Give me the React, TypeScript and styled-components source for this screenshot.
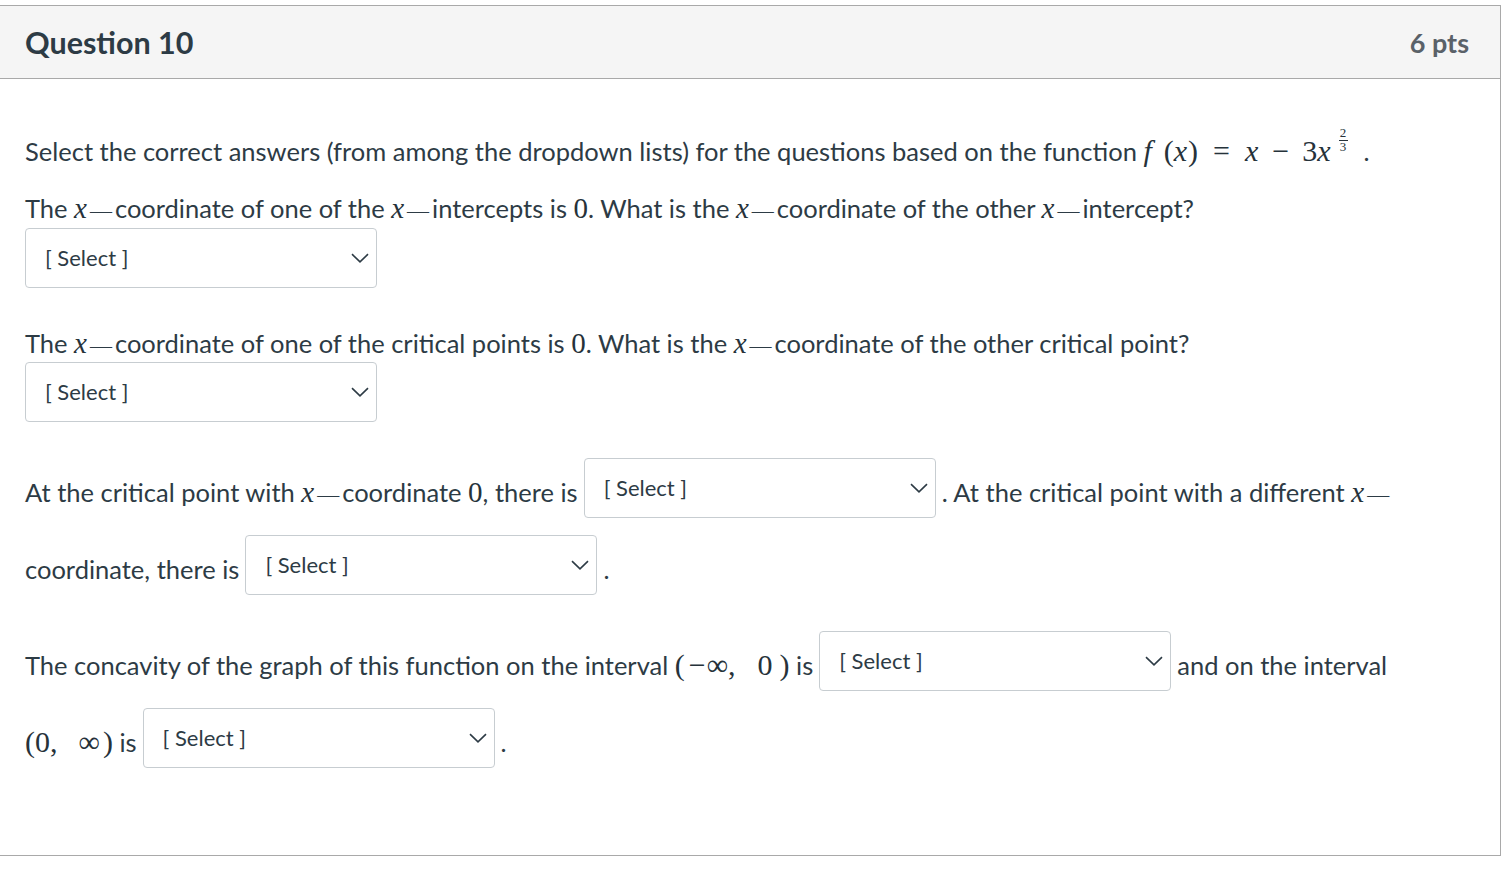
import React from "react";
import styled, { createGlobalStyle } from "styled-components";

const GlobalStyle = createGlobalStyle`
  html, body {
    margin: 0;
    padding: 0;
    background: #ffffff;
  }
  body {
    font-family: Lato, "Noto Sans", sans-serif;
    color: #2d3b45;
  }
`;

const Card = styled.div`
  box-sizing: border-box;
  width: 1502px;
  height: 851px;
  margin: 5px 0 0 -1px;
  border: 1px solid #a9a9a9;
  background: #ffffff;
`;

const Header = styled.div`
  display: flex;
  align-items: center;
  justify-content: space-between;
  height: 72px;
  padding: 0 31px 0 25px;
  background: #f5f5f5;
  border-bottom: 1px solid #a9a9a9;
`;

const Title = styled.h2`
  margin: 0;
  font-size: 30.5px;
  font-weight: 700;
  color: #2d3b45;
`;

const Points = styled.span`
  font-size: 27px;
  font-weight: 700;
  color: #5a6168;
`;

const Body = styled.div`
  padding: 0 24px 0 25px;
  font-size: 25.5px;
  line-height: 36px;
`;

const Para = styled.p<{ $top: number }>`
  margin: ${(p) => p.$top}px 0 0;
`;

const FlowPara = styled.p<{ $top: number }>`
  margin: ${(p) => p.$top}px 0 0;
  line-height: 77px;
`;

const M = styled.span<{ $size?: number }>`
  font-family: "Liberation Serif", "DejaVu Serif", serif;
  font-size: ${(p) => p.$size ?? 29}px;
  line-height: 1;
  white-space: nowrap;
  color: #26323a;
`;

const Mi = styled.i`
  font-family: "Liberation Serif", "DejaVu Serif", serif;
  font-size: inherit;
  line-height: 1;
  padding-right: 1px;
  color: #26323a;
`;

const MathX = styled(Mi)`
  font-size: 29px;
`;

const Op = styled.span<{ $gap: number }>`
  margin: 0 ${(p) => p.$gap}px;
`;

const Gap = styled.span<{ $w: number }>`
  display: inline-block;
  width: ${(p) => p.$w}px;
`;

const Dash = styled.span`
  font-family: "Liberation Serif", "DejaVu Serif", serif;
  font-size: 22px;
  line-height: 1;
  margin: 0 3px 0 2px;
`;

const Frac = styled.span`
  display: inline-flex;
  flex-direction: column;
  align-items: center;
  vertical-align: 24px;
  margin: 0 0 0 7px;
  font-size: 13px;
  line-height: 12px;
`;

const FracBar = styled.span`
  width: 9px;
  margin: 1px 0 0;
  border-top: 1px solid #26323a;
`;

const SelectBox = styled.span<{ $inline?: boolean; $top?: number }>`
  box-sizing: border-box;
  display: ${(p) => (p.$inline ? "inline-flex" : "flex")};
  align-items: center;
  justify-content: space-between;
  width: 352px;
  height: 60px;
  padding: 0 7px 0 19px;
  border: 1px solid #c7cdd1;
  border-radius: 4px;
  background: #ffffff;
  font-family: Lato, sans-serif;
  font-size: 22px;
  line-height: 26px;
  color: #2d3b45;
  vertical-align: 6px;
  margin: ${(p) => p.$top ?? 0}px ${(p) => (p.$inline ? "6px" : "0")} 0;
`;

const Chevron = () => (
  <svg width="18" height="10" viewBox="0 0 18 10" fill="none">
    <path d="M1 1.2L9 8.8L17 1.2" stroke="#2d3b45" strokeWidth="1.6" />
  </svg>
);

const Select = ({ inline, top }: { inline?: boolean; top?: number }) => (
  <SelectBox $inline={inline} $top={top}>
    <span>[ Select ]</span>
    <Chevron />
  </SelectBox>
);

const X = () => <MathX>x</MathX>;

const XDash = () => (
  <>
    <X />
    <Dash>—</Dash>
    <wbr />
  </>
);

export default function App() {
  return (
    <>
      <GlobalStyle />
      <Card>
        <Header>
          <Title>Question 10</Title>
          <Points>6 pts</Points>
        </Header>
        <Body>
          <Para $top={48}>
            Select the correct answers (from among the dropdown lists) for the questions based on the function{" "}
            <M $size={30}>
              <Mi>f</Mi>
              <Gap $w={11} />(<Mi>x</Mi>)<Op $gap={15}>=</Op>
              <Mi>x</Mi>
              <Op $gap={13}>−</Op>3<Mi>x</Mi>
              <Frac>
                <span>2</span>
                <FracBar />
                <span>3</span>
              </Frac>
            </M>
            <Gap $w={16} />.
          </Para>
          <Para $top={21}>
            The <XDash />coordinate of one of the <XDash />intercepts is <M>0</M>. What is the <XDash />coordinate of
            the other <XDash />intercept?
          </Para>
          <Select top={2} />
          <Para $top={37}>
            The <XDash />coordinate of one of the critical points is <M>0</M>. What is the <XDash />coordinate of the
            other critical point?
          </Para>
          <Select top={1} />
          <FlowPara $top={32}>
            At the critical point with <XDash />coordinate <M>0</M>, there is
            <Select inline />. At the critical point with a different <XDash />
            coordinate, there is
            <Select inline />.
          </FlowPara>
          <FlowPara $top={19}>
            The concavity of the graph of this function on the interval{" "}
            <M $size={30}>
              (<Gap $w={4} />−<Gap $w={1} />∞,<Gap $w={22} />0<Gap $w={7} />)
            </M>
            {"\u00a0"}is
            <Select inline />
            and on the interval{" "}
            <M $size={30}>
              (0,<Gap $w={21} />∞<Gap $w={3} />)
            </M>
            {"\u00a0"}is
            <Select inline />.
          </FlowPara>
        </Body>
      </Card>
    </>
  );
}
